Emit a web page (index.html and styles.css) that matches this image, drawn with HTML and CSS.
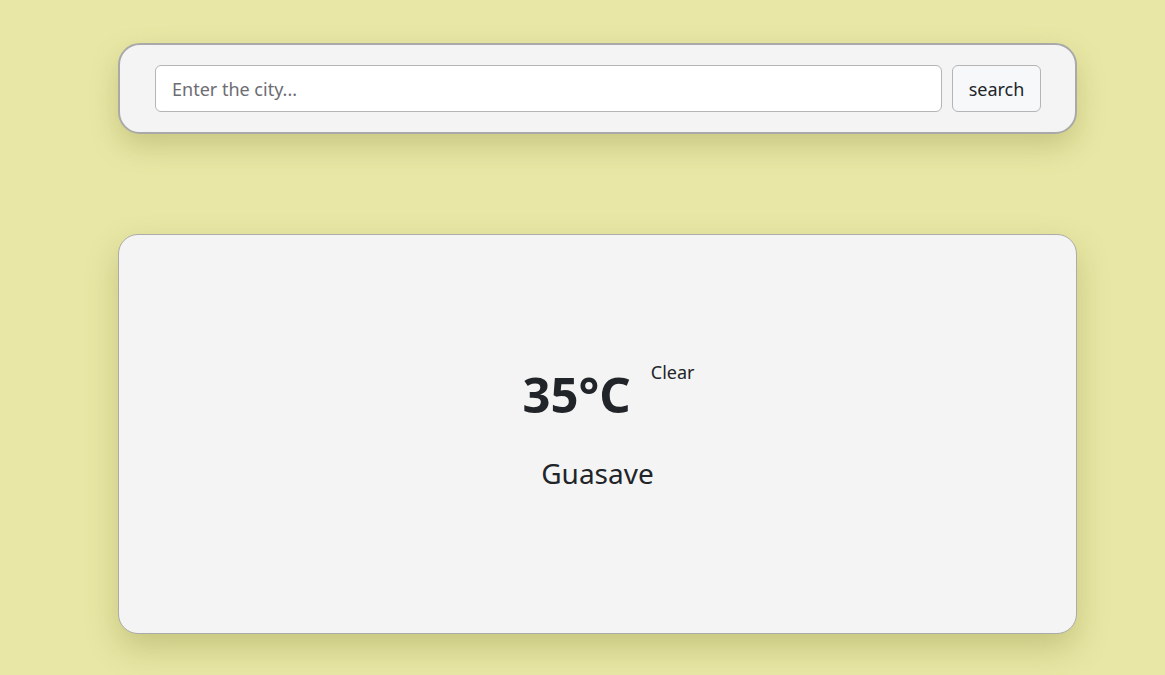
FILE: index.html
```html
<!DOCTYPE html>
<html lang="en">
<head>
<meta charset="utf-8">
<title>Weather</title>
<link rel="stylesheet" href="styles.css">
</head>
<body>
<main class="page">
  <section class="search-card">
    <input class="city-input" type="text" placeholder="Enter the city...">
    <button class="search-btn" type="button">search</button>
  </section>
  <section class="weather-card">
    <div class="temp-row">
      <span class="temp">35°C</span>
      <span class="cond">Clear</span>
    </div>
    <div class="city">Guasave</div>
  </section>
</main>
</body>
</html>
```

FILE: styles.css
```css
* { box-sizing: border-box; }
html, body {
  margin: 0;
  height: 100%;
}
body {
  background: #e8e7a5;
  font-family: "Noto Sans", "Open Sans", sans-serif;
  color: #212529;
  overflow: hidden;
}
.page {
  width: 959px;
  margin-left: 118px;
  padding-top: 43px;
  display: flex;
  flex-direction: column;
  gap: 100px;
}
.search-card {
  height: 91px;
  background: #f4f4f4;
  border: 2px solid #a9a9a9;
  border-radius: 22px;
  padding: 20px 34px 0 35px;
  display: flex;
  gap: 10px;
  box-shadow: 0 12px 28px rgba(120, 120, 40, 0.28);
}
.city-input {
  flex: 1;
  height: 47px;
  border: 1px solid #b5b5b5;
  border-radius: 6px;
  background: #fff;
  padding: 0 16px;
  font-family: inherit;
  font-size: 18px;
  color: #212529;
  outline: none;
}
.city-input::placeholder { color: #6c6c72; }
.search-btn {
  width: 89px;
  height: 47px;
  border: 1px solid #b5b5b5;
  border-radius: 6px;
  background: #f7f8fa;
  font-family: inherit;
  font-size: 18px;
  color: #212529;
  padding: 0;
}
.weather-card {
  height: 400px;
  background: #f4f4f4;
  border: 1px solid #ababab;
  border-radius: 20px;
  display: flex;
  flex-direction: column;
  align-items: center;
  justify-content: center;
  box-shadow: 0 14px 32px rgba(120, 120, 40, 0.3);
  padding-bottom: 12px;
}
.temp-row {
  display: flex;
  align-items: flex-start;
  gap: 20px;
  padding-left: 22px;
}
.temp {
  font-size: 49px;
  font-weight: 700;
  line-height: 1.2;
}
.cond {
  font-size: 18px;
  line-height: 1;
  margin-top: -2px;
}
.city {
  font-size: 28px;
  line-height: 1.2;
  margin-top: 33px;
}
```
